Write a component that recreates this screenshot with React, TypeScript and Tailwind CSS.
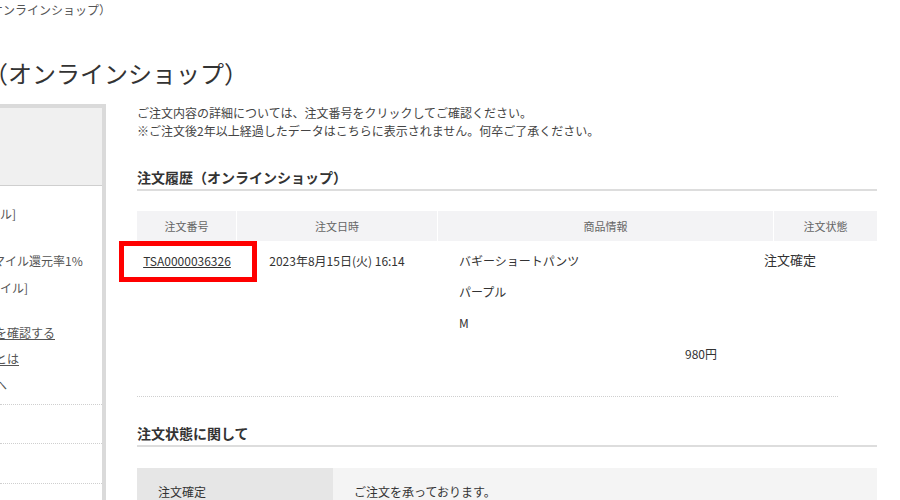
import React from "react";

const productLines = ["バギーショートパンツ", "パープル", "M"];

const Sidebar = () => {
  return (
    <aside className="w-[106px] shrink-0 border-t-[4px] border-r-[4px] border-[#dadada]">
      <div className="h-[78px] bg-[#f0f0f0] border-b border-[#cfcfcf]" />
      <div className="text-[12px] leading-[18px] text-[#555] whitespace-nowrap">
        <div className="pt-[19px] pb-[10px] border-b border-dotted border-[#cfcfcf]">
          <p>ル]</p>
          <p className="mt-[29px] -ml-[7px]">マイル還元率1%</p>
          <p className="mt-[9px]">イル]</p>
          <p className="mt-[27px] -ml-[5px] underline">を確認する</p>
          <p className="mt-[8px] -ml-[5px] underline">とは</p>
          <p className="mt-[8px] -ml-[5px]">へ</p>
        </div>
        <div className="h-[39px] border-b border-dotted border-[#cfcfcf]" />
        <div className="h-[40px] border-b border-dotted border-[#cfcfcf]" />
        <div className="h-[40px]" />
      </div>
    </aside>
  );
};

const OrderTable = () => {
  return (
    <div className="mt-[20px]">
      <div className="flex gap-[1px] h-[30px] text-[11px] text-[#666]">
        <div className="w-[99px] bg-[#f3f3f5] flex items-center justify-center">注文番号</div>
        <div className="w-[200px] bg-[#f3f3f5] flex items-center justify-center">注文日時</div>
        <div className="w-[335px] bg-[#f3f3f5] flex items-center justify-center">商品情報</div>
        <div className="flex-1 bg-[#f3f3f5] flex items-center justify-center">注文状態</div>
      </div>
      <div className="flex text-[12px] leading-[18px] text-[#333] pt-[11px] pb-[33px]">
        <div className="w-[100px] relative flex justify-center">
          <span className="underline">TSA0000036326</span>
          <div className="absolute -left-[18px] -top-[11px] w-[138px] h-[41px] border-[5px] border-[#ff0000]" />
        </div>
        <div className="w-[200px] flex justify-center">2023年8月15日(火) 16:14</div>
        <div className="w-[327px] pl-[22px] pr-[47px] flex flex-col gap-[13px]">
          {productLines.map((line) => (
            <p key={line}>{line}</p>
          ))}
          <p className="text-right">980円</p>
        </div>
        <div className="flex-1 text-[13px] -mt-[1px]">注文確定</div>
      </div>
      <div className="w-[701px] border-b border-dotted border-[#cfcfcf]" />
    </div>
  );
};

const App = () => {
  return (
    <div
      className="w-[900px] h-[500px] overflow-hidden bg-white text-[#333]"
      style={{ fontFamily: '"Noto Sans CJK JP", "Noto Sans", sans-serif' }}
    >
      <div className="h-[20px] leading-[20px] text-[12px] text-[#555] whitespace-nowrap -ml-[9px]">
        オンラインショップ）
      </div>
      <h1 className="mt-[35px] h-[36px] leading-[36px] text-[24px] whitespace-nowrap -ml-[16px] font-normal">
        （オンラインショップ）
      </h1>

      <div className="flex mt-[13px]">
        <Sidebar />

        <main className="ml-[31px] w-[740px]">
          <p className="text-[12px] leading-[18px] text-[#444]">
            ご注文内容の詳細については、注文番号をクリックしてご確認ください。
          </p>
          <p className="text-[12px] leading-[18px] text-[#444]">
            ※ご注文後2年以上経過したデータはこちらに表示されません。何卒ご了承ください。
          </p>

          <h2 className="mt-[27px] text-[14px] leading-[20px] font-bold pb-[2px] border-b-2 border-[#dddddd]">
            注文履歴（オンラインショップ）
          </h2>

          <OrderTable />

          <h2 className="mt-[26px] text-[14px] leading-[20px] font-bold pb-[2px] border-b-2 border-[#dddddd]">
            注文状態に関して
          </h2>

          <div className="mt-[21px] flex text-[12px] leading-[18px] text-[#333]">
            <div className="w-[196px] bg-[#e6e6e6] pl-[21px] pt-[15px] pb-[20px]">注文確定</div>
            <div className="flex-1 bg-[#f4f4f4] pl-[21px] pt-[15px] pb-[20px]">ご注文を承っております。</div>
          </div>
        </main>
      </div>
    </div>
  );
};

export default App;
